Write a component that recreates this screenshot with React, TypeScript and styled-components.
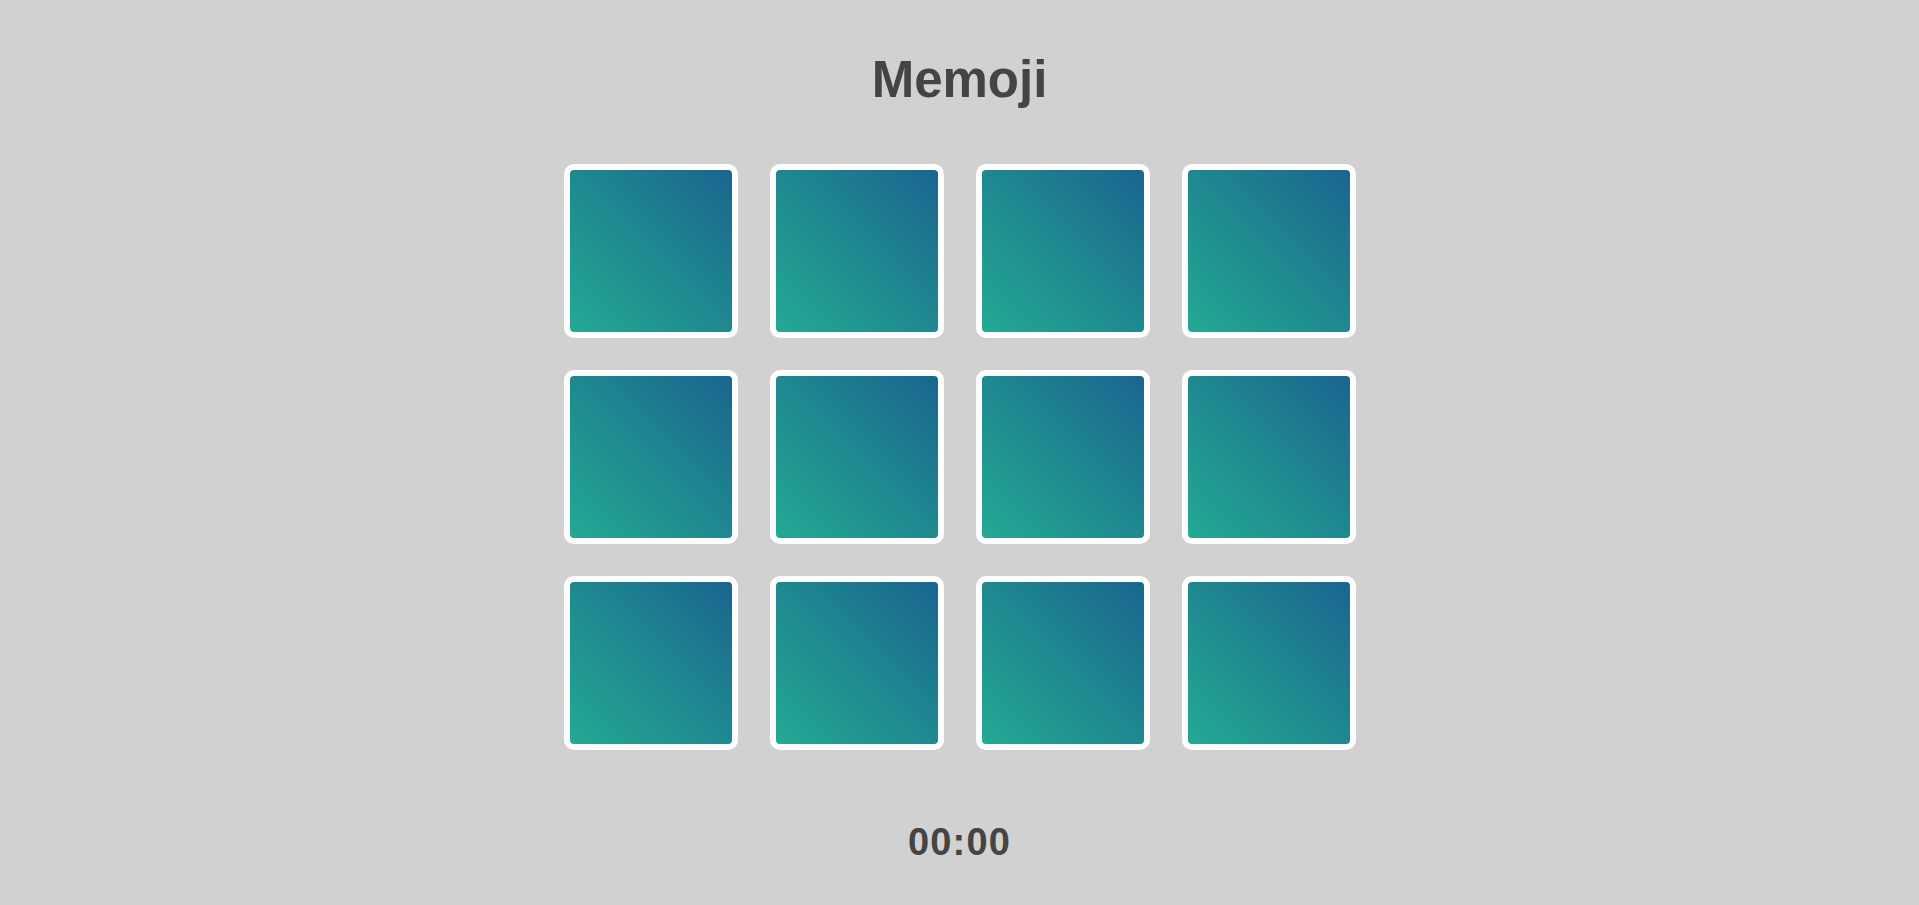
import React from "react";
import styled, { createGlobalStyle } from "styled-components";

const GlobalStyle = createGlobalStyle`
  html, body {
    margin: 0;
    padding: 0;
    background: #d1d1d1;
  }
  body {
    font-family: "Liberation Sans", Arial, sans-serif;
    color: #444444;
  }
`;

const Page = styled.main`
  display: flex;
  flex-direction: column;
  align-items: center;
  min-height: 905px;
  padding-top: 54px;
  box-sizing: border-box;
`;

const Title = styled.h1`
  margin: 0;
  font-size: 51px;
  line-height: 1;
  font-weight: 700;
  color: #444444;
`;

const Board = styled.div`
  margin-top: 59px;
  display: grid;
  grid-template-columns: repeat(4, 174px);
  grid-auto-rows: 174px;
  gap: 32px;
`;

const Card = styled.div`
  box-sizing: border-box;
  border: 6px solid #ffffff;
  border-radius: 10px;
  background: linear-gradient(45deg, #23a993 0%, #1f8890 50%, #1a658f 100%);
  cursor: pointer;
`;

const Timer = styled.div`
  margin-top: 73px;
  font-size: 38px;
  line-height: 1;
  letter-spacing: 1.2px;
  font-weight: 700;
  color: #444444;
`;

export default function App() {
  const cards = Array.from({ length: 12 }, (_, i) => i);
  return (
    <>
      <GlobalStyle />
      <Page>
        <Title>Memoji</Title>
        <Board>
          {cards.map((i) => (
            <Card key={i} />
          ))}
        </Board>
        <Timer>00:00</Timer>
      </Page>
    </>
  );
}
